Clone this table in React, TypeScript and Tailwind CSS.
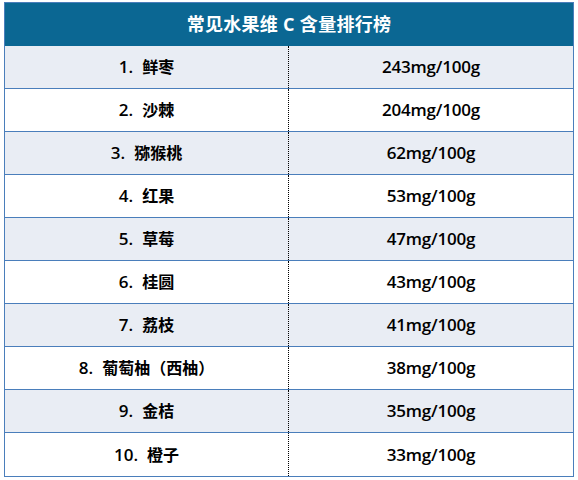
import React from "react";

const rows: [string, string, string][] = [
  ["1.", "鲜枣", "243mg/100g"],
  ["2.", "沙棘", "204mg/100g"],
  ["3.", "猕猴桃", "62mg/100g"],
  ["4.", "红果", "53mg/100g"],
  ["5.", "草莓", "47mg/100g"],
  ["6.", "桂圆", "43mg/100g"],
  ["7.", "荔枝", "41mg/100g"],
  ["8.", "葡萄柚（西柚）", "38mg/100g"],
  ["9.", "金桔", "35mg/100g"],
  ["10.", "橙子", "33mg/100g"],
];

export default function App() {
  return (
    <div
      className="w-[578px] h-[480px] bg-white pt-[2px] pl-[4px]"
      style={{ fontFamily: '"Open Sans", "Noto Sans CJK SC", sans-serif' }}
    >
      <div className="w-[570px] border border-[#4a7ebb]">
        <div className="h-[43px] bg-[#0b6793] flex items-center justify-center text-white text-[18px] font-bold tracking-[0.3px]">
          常见水果维 C 含量排行榜
        </div>
        {rows.map(([n, name, val], i) => (
          <div
            key={n}
            className={`grid grid-cols-2 h-[43px] ${i < rows.length - 1 ? "border-b border-[#4a7ebb]" : "h-[42px]"} ${i % 2 === 0 ? "bg-[#e9edf4]" : "bg-white"}`}
          >
            <div className="flex items-center justify-center border-r border-dotted border-black text-black text-[16px] font-semibold">
              <span className="text-[17px] mr-[9px]">{n}</span>
              <span>{name}</span>
            </div>
            <div className="flex items-center justify-center text-black text-[17px] font-semibold tracking-[-0.2px]">
              {val}
            </div>
          </div>
        ))}
      </div>
    </div>
  );
}
